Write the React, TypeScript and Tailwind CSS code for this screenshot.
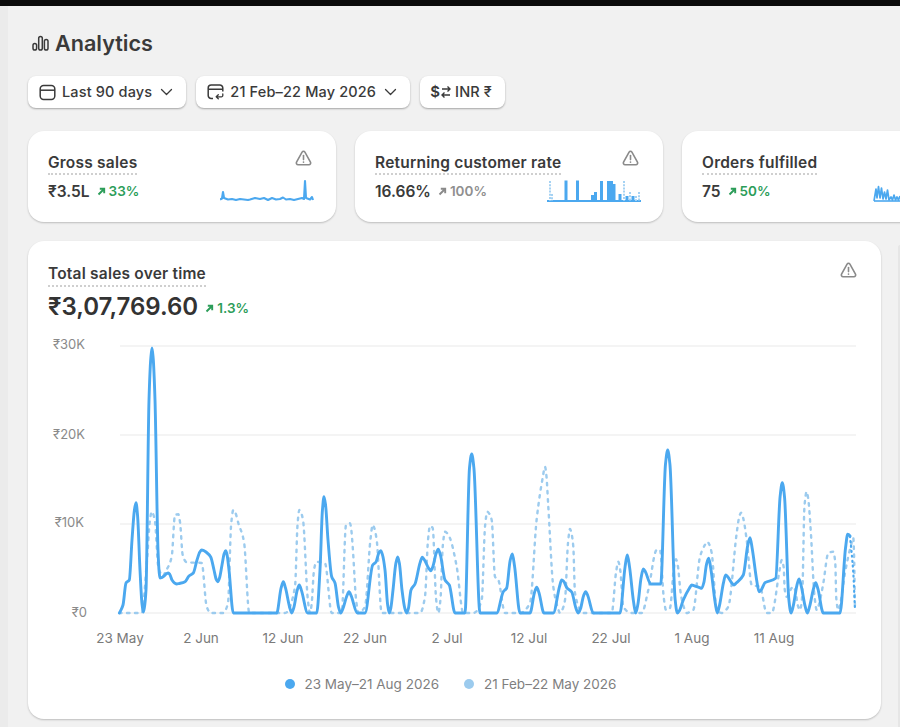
import React from "react";

type P = [number, number];

const solid: P[] = [[119.5,613],[123,605],[126,583],[129.3,580],[132,540],[136,502.7],[140,570],[143.3,612],[146,590],[149,400],[152,348],[155,400],[158,550],[160,578],[164,576],[168.3,573],[172,580],[176.7,584],[185,581.7],[189,576],[193.3,573],[197,560],[201.7,550],[206,552],[210.7,557],[214,570],[217.7,581.7],[222,565],[225.7,550.7],[229,570],[233.3,613],[276.7,613],[283.3,581.7],[291.7,613],[299.3,585],[307.7,613],[316.7,613],[320,570],[324,496.7],[328,540],[331.7,576.7],[335,583],[340.7,613],[349,591.7],[357.3,613],[365,613],[372.7,565],[376,562],[380.7,550.7],[385,570],[389.3,613],[393,590],[397.7,557],[402,590],[406.7,613],[411,590],[415,584],[422.3,557.3],[430.7,570.7],[438.3,549.3],[445,580],[449.3,585],[455,613],[465,613],[471.7,454],[480,613],[496.7,613],[503.3,591.7],[506.7,588],[512.3,554],[520,613],[530,613],[536.7,587.3],[544,613],[553.3,613],[561.7,580],[567,588],[571.7,592],[578.3,613],[585.7,591.7],[593.3,613],[620,613],[627.3,555],[635.7,613],[643.3,569],[650.7,584],[660.7,584],[667.7,450],[677.3,613],[683.3,600],[691.7,585],[701.7,588.3],[708.7,558.3],[717.3,613],[725.7,575],[734,585],[743.3,575],[750,537.7],[759,591.7],[765,582.7],[775.7,578.3],[782.3,482.7],[791,613],[799,579],[807.3,613],[815.7,582.7],[823.3,613],[840,613],[847.7,534.3],[850,536]];

const tail: P[] = [[850,536],[853.3,573],[855,610]];

const dashed: P[] = [[119,613],[141.7,613],[147,560],[151.7,511.7],[155,521.7],[158.3,566.7],[163,576],[171.7,556.7],[175,515],[178.3,514.3],[182.7,555],[186.7,562.3],[201.7,563],[206.7,606.7],[210.7,613],[223,613],[228,603],[233.3,510],[238.3,523],[244,541.7],[249.3,613],[285,613],[295,586.7],[299.3,510],[303,520],[310,613],[314,570],[316.7,561.7],[325,563.3],[331.7,613],[341.7,613],[346,525],[350,523.3],[352.7,546.7],[358.3,613],[365,606.7],[372.7,525],[376.7,540],[381.7,613],[420,613],[425,596.7],[430,526],[432.7,528],[438.3,613],[445,531.7],[450,538.3],[456.7,566.7],[463.3,613],[473.3,613],[481.7,600],[487.3,511.7],[491.7,520],[495,576.7],[498.3,580],[505,613],[520,613],[530,603],[536.7,519],[545,466.7],[548.3,506.7],[553.3,586.7],[560,613],[565,600],[570,529],[573.3,546.7],[575,593],[583.3,613],[611.7,613],[618.3,561.7],[623.3,606.7],[631.7,613],[641.7,613],[648.3,590],[656.7,550],[660,550],[666,610],[670,608],[676,559.3],[680.7,593.3],[686.7,613],[693.3,610],[700,556.7],[707.3,541.7],[711.7,553],[716.7,610],[721.7,613],[728.3,606.7],[736.7,533],[741,512.7],[746.7,540],[751.7,585],[760,586.7],[766.7,613],[771.7,613],[781.7,560],[786.7,596.7],[793.3,586.7],[800,610],[806.7,491.7],[810.7,530],[816.7,610],[823.3,583.3],[828.3,553],[833.3,551.7],[838.3,610],[845,573],[853.3,538],[855,610]];

// Adds two shoulder points beside every peak and dip, so the traced extremes read as round bells.
function soften(pts: P[]): P[] {
  const out: P[] = [pts[0]];
  for (let i = 1; i < pts.length - 1; i++) {
    const [x, y] = pts[i];
    const [x0, y0] = pts[i - 1];
    const [x1, y1] = pts[i + 1];
    if ((y - y0) * (y1 - y) < 0) {
      const dl = Math.min(2.2, (x - x0) * 0.4);
      const dr = Math.min(2.2, (x1 - x) * 0.4);
      const el = Math.min(Math.abs(y0 - y) * 0.2, 14) * Math.sign(y0 - y);
      const er = Math.min(Math.abs(y1 - y) * 0.2, 14) * Math.sign(y1 - y);
      out.push([x - dl, y + el], [x, y], [x + dr, y + er]);
    } else out.push(pts[i]);
  }
  out.push(pts[pts.length - 1]);
  return out;
}

// Monotone cubic interpolation, so that the traced peaks never overshoot the baseline.
function curve(pts: P[]): string {
  const n = pts.length;
  const s: number[] = [];
  for (let i = 0; i < n - 1; i++) s.push((pts[i + 1][1] - pts[i][1]) / (pts[i + 1][0] - pts[i][0]));
  const m: number[] = [s[0]];
  for (let i = 1; i < n - 1; i++) {
    if (s[i - 1] * s[i] <= 0) m.push(0);
    else {
      const h0 = pts[i][0] - pts[i - 1][0];
      const h1 = pts[i + 1][0] - pts[i][0];
      m.push(((h0 + h1) * 3) / ((2 * h1 + h0) / s[i - 1] + (h1 + 2 * h0) / s[i]));
    }
  }
  m.push(s[n - 2]);
  let d = `M${pts[0][0]} ${pts[0][1]}`;
  for (let i = 0; i < n - 1; i++) {
    const h = (pts[i + 1][0] - pts[i][0]) / 3;
    d += `C${(pts[i][0] + h).toFixed(2)} ${(pts[i][1] + m[i] * h).toFixed(2)} ${(pts[i + 1][0] - h).toFixed(2)} ${(pts[i + 1][1] - m[i + 1] * h).toFixed(2)} ${pts[i + 1][0]} ${pts[i + 1][1]}`;
  }
  return d;
}

function Warn() {
  return (
    <svg width="17" height="16" viewBox="0 0 18 17" fill="none" stroke="#8a8a8a" strokeWidth="1.7" className="shrink-0">
      <path d="M7.5 2.2 1.6 12.9c-.7 1.3.2 2.7 1.6 2.7h11.6c1.4 0 2.3-1.4 1.6-2.7L10.5 2.2c-.7-1.2-2.3-1.2-3 0Z" strokeLinejoin="round" />
      <path d="M9 5.8v4.4" strokeLinecap="round" />
      <circle cx="9" cy="12.8" r="0.9" fill="#8a8a8a" stroke="none" />
    </svg>
  );
}

function Arrow({ color }: { color: string }) {
  return (
    <svg width="9" height="9" viewBox="0 0 9 9" fill="none" stroke={color} strokeWidth="1.9" className="shrink-0">
      <path d="M1.5 7.5 7 2M2.8 1.8h4.4v4.4" />
    </svg>
  );
}

function Chevron() {
  return (
    <svg width="13" height="8" viewBox="0 0 13 8" fill="none" stroke="#3a3a3a" strokeWidth="1.3" strokeLinecap="round" strokeLinejoin="round" className="shrink-0">
      <path d="M1.5 1.5 6.5 6.5 11.5 1.5" />
    </svg>
  );
}

function Metric({ title, value, delta, up, spark }: { title: string; value: string; delta: string; up: boolean; spark: React.ReactNode }) {
  return (
    <div className="relative flex h-[91px] w-[308px] shrink-0 flex-col rounded-2xl bg-white pl-[20px] pr-[24px] pt-[22px] shadow-[0_1px_2px_rgba(0,0,0,0.22)]">
      <div className="flex items-start justify-between">
        <span className="border-b-2 border-dotted border-[#cfcfcf] text-[15.5px] font-semibold leading-[20px] tracking-[0.22px] text-[#3a3a3a]">{title}</span>
        <div className="-mt-[3px]"><Warn /></div>
      </div>
      <div className="mt-[6px] flex items-center gap-[7px]">
        <span className="text-[15.5px] font-semibold leading-[22px] text-[#3a3a3a]">{value}</span>
        <span className={`-mt-[1px] flex items-center gap-[3px] text-[13.5px] font-semibold ${up ? "text-[#2c9d59]" : "text-[#8f8f8f]"}`}>
          <Arrow color={up ? "#2c9d59" : "#8a8a8a"} />
          {delta}
        </span>
      </div>
      {spark}
    </div>
  );
}

const Btn = ({ children }: { children: React.ReactNode }) => (
  <div className="flex h-[32px] items-center rounded-lg bg-white pl-[11px] pr-[13px] text-[14.5px] font-medium tracking-[0.15px] text-[#3a3a3a] shadow-[0_1px_2px_rgba(0,0,0,0.32)]">{children}</div>
);

const grossSpark = "M220 199.5 222 198.5 223 192 224 198 228 199.5 232 199 236 200 240 199 244 199.5 248 200 250 199.5 255 198 260 199 264 198 268 200 272 198 276 199.5 280 199 283 197.5 286 199.5 290 199 294 200 298 199 302 198 304 199 305 181 306 198 310 199.5 312 197 313 200";

export default function App() {
  return (
    <div className="relative flex h-[727px] w-[900px] flex-col overflow-hidden bg-[#f1f1f1] font-['Inter',sans-serif]">
      <div className="h-[6px] shrink-0 bg-[#0b0b0b]" />
      <div className="flex min-h-0 flex-1">
        <div className="w-[8px] shrink-0 bg-[#ebebeb]" />
        <div className="flex flex-col pl-[20px]">
          <div className="mt-[22px] flex h-[30px] items-center gap-[6px] pl-[4px]">
            <svg width="17" height="16" viewBox="0 0 17 16" fill="none" stroke="#3a3a3a" strokeWidth="1.5">
              <rect x="1" y="8.5" width="3.6" height="6.5" rx="1.8" />
              <rect x="6.7" y="1.5" width="3.6" height="13.5" rx="1.8" />
              <rect x="12.4" y="4.5" width="3.6" height="10.5" rx="1.8" />
            </svg>
            <h1 className="text-[21.6px] font-semibold leading-[30px] text-[#3a3a3a]">Analytics</h1>
          </div>
          <div className="mt-[18px] flex gap-[10px]">
            <Btn>
              <svg width="17" height="17" viewBox="0 0 17 17" fill="none" stroke="#3a3a3a" strokeWidth="1.5" className="mr-[6px]">
                <rect x="1.2" y="1.6" width="14.6" height="13.8" rx="3.4" />
                <path d="M1.2 6.2h14.6" />
              </svg>
              Last 90 days
              <span className="ml-[8px]"><Chevron /></span>
            </Btn>
            <Btn>
              <svg width="18" height="18" viewBox="0 0 18 18" fill="none" stroke="#3a3a3a" strokeWidth="1.5" className="mr-[5px]">
                <path d="M6 15.5H4.2a3 3 0 0 1-3-3V5a3 3 0 0 1 3-3h8.6a3 3 0 0 1 3 3v3.5M1.2 6.2h14.6" />
                <path d="M15.8 11v1.4a1.4 1.4 0 0 1-1.4 1.4H9.2M11.3 11.8l-2.1 2 2.1 2" strokeWidth="1.3" strokeLinecap="round" strokeLinejoin="round" />
              </svg>
              21 Feb–22 May 2026
              <span className="ml-[8px]"><Chevron /></span>
            </Btn>
            <Btn>
              <span className="-ml-[1px] text-[15px] font-semibold">$</span>
              <svg width="10" height="14" viewBox="0 0 10 14" fill="none" stroke="#3a3a3a" strokeWidth="1.4" className="mr-[4px] ml-[1px]">
                <path d="M1 4h8M6.5 1.5 9 4 6.5 6.5M9 10H1M3.5 7.5 1 10l2.5 2.5" />
              </svg>
              INR ₹
            </Btn>
          </div>
          <div className="mt-[23px] flex w-[1000px] gap-[19px]">
            <Metric title="Gross sales" value="₹3.5L" delta="33%" up spark={
              <svg width="94" height="24" viewBox="220 178 94 24" fill="none" className="absolute left-[192px] top-[47px]">
                <path d={grossSpark} stroke="#4ba8ef" strokeWidth="2.1" strokeLinejoin="round" />
              </svg>
            } />
            <Metric title="Returning customer rate" value="16.66%" delta="100%" up={false} spark={
              <svg width="96" height="26" viewBox="546 178 96 26" fill="none" className="absolute left-[191px] top-[47px]">
                <path d="M547 201H641" stroke="#4ba8ef" strokeWidth="1.8" />
                <path d="M550 181V201M552 194V201M624 181V201M630 192V201M636 196V201M639 192V201" stroke="#a5d2f3" strokeWidth="2" strokeDasharray="2 1.2" />
                <path d="M566 180.5V201M577.5 180.5V201M592.5 195V201M595.5 192V201M601.5 181V201M608.5 181V201M611.5 181V201M614 184V201M620 194V201M627 196V201M633 196V201" stroke="#4ba8ef" strokeWidth="3" />
              </svg>
            } />
            <Metric title="Orders fulfilled" value="75" delta="50%" up spark={
              <svg width="30" height="20" viewBox="873 184 30 20" fill="none" className="absolute left-[191px] top-[53px]">
                <path d="M874 201 876 189 877 198 878.5 186.5 880 198 881.5 188 883 199 884.5 192 886 199 887.5 190 889 200 891 197 892.5 200 894 195 895.5 200 897 197 898.5 200 900 196" stroke="#4ba8ef" strokeWidth="1.7" strokeLinejoin="round" />
                <path d="M874 201H900" stroke="#4ba8ef" strokeWidth="1.6" />
              </svg>
            } />
          </div>
          <div className="relative mt-[19px] flex h-[478px] w-[853px] flex-col rounded-2xl bg-white shadow-[0_1px_2px_rgba(0,0,0,0.22)]">
            <div className="absolute right-[24px] top-[21px]"><Warn /></div>
            <div className="flex flex-col items-start pl-[20px] pt-[23px]">
              <span className="border-b-2 border-dotted border-[#cfcfcf] pb-[1px] text-[15.5px] font-semibold leading-[20px] tracking-[0.2px] text-[#3a3a3a]">Total sales over time</span>
              <div className="mt-[5px] flex items-center gap-[7px]">
                <span className="text-[24px] font-semibold leading-[30px] text-[#333333]">₹3,07,769.60</span>
                <span className="mt-[2px] flex items-center gap-[3px] text-[13.5px] font-semibold text-[#2c9d59]"><Arrow color="#2c9d59" />1.3%</span>
              </div>
            </div>
            <svg width="853" height="320" viewBox="28 330 853 320" fill="none" className="mt-[8px] block shrink-0">
              {[346, 435, 524, 613].map((y) => <path key={y} d={`M120 ${y}H856`} stroke="#f1f1f1" strokeWidth="1.5" />)}
              <g fill="#8a8a8a" fontSize="13" textAnchor="end" fontFamily="Inter, sans-serif">
                <text x="85" y="349">₹30K</text>
                <text x="85" y="439">₹20K</text>
                <text x="84" y="527">₹10K</text>
                <text x="87" y="617">₹0</text>
              </g>
              <g fill="#7a7a7a" fontSize="13.5" textAnchor="middle" fontFamily="Inter, sans-serif">
                <text x="120" y="643">23 May</text>
                <text x="201" y="643">2 Jun</text>
                <text x="283" y="643">12 Jun</text>
                <text x="365" y="643">22 Jun</text>
                <text x="447" y="643">2 Jul</text>
                <text x="529" y="643">12 Jul</text>
                <text x="611" y="643">22 Jul</text>
                <text x="692" y="643">1 Aug</text>
                <text x="774" y="643">11 Aug</text>
              </g>
              <path d={curve(soften(dashed))} stroke="#9ccbee" strokeWidth="2.4" strokeLinecap="round" strokeDasharray="2.5 5.5" />
              <path d={curve(soften(solid))} stroke="#4ba8ef" strokeWidth="2.9" strokeLinejoin="round" strokeLinecap="round" />
              <path d={curve(tail)} stroke="#4ba8ef" strokeWidth="2.2" strokeLinecap="round" strokeDasharray="1 4" />
            </svg>
            <div className="mt-[25px] flex items-center justify-center gap-[25px] pr-[8px] text-[13.5px] leading-[18px] text-[#7f7f7f]">
              <span className="flex items-center gap-[10px]"><span className="h-[10px] w-[10px] rounded-full bg-[#4ba8ef]" />23 May–21 Aug 2026</span>
              <span className="flex items-center gap-[10px]"><span className="h-[10px] w-[10px] rounded-full bg-[#9ccbee]" />21 Feb–22 May 2026</span>
            </div>
          </div>
        </div>
      </div>
      <div className="absolute right-0 top-[245px] h-[482px] w-[2px] rounded-tl bg-[#e6e6e6]" />
    </div>
  );
}
